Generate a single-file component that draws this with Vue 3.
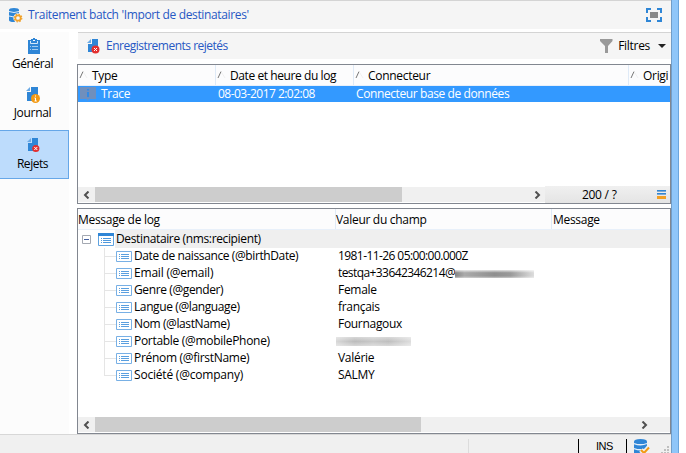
<script setup>
const logColumns = [
  { label: 'Type', cls: 'c-type' },
  { label: 'Date et heure du log', cls: 'c-date' },
  { label: 'Connecteur', cls: 'c-conn' },
  { label: 'Origi', cls: 'c-orig' },
]
const fields = [
  { name: 'Date de naissance (@birthDate)', value: '1981-11-26 05:00:00.000Z', tight: 't-digits' },
  { name: 'Email (@email)', value: 'testqa+33642346214@', mask: 'mask-mail', fit: 't-wide', tight: 't-digits' },
  { name: 'Genre (@gender)', value: 'Female' },
  { name: 'Langue (@language)', value: 'français' },
  { name: 'Nom (@lastName)', value: 'Fournagoux' },
  { name: 'Portable (@mobilePhone)', value: '', mask: 'mask-phone', fit: 't-normal' },
  { name: 'Prénom (@firstName)', value: 'Valérie', fit: 't-normal' },
  { name: 'Société (@company)', value: 'SALMY', fit: 't-wide' },
]
</script>

<template>
  <div class="window">
    <div class="client">
      <header class="titlebar">
        <svg class="db" width="14" height="15" viewBox="0 0 14 15">
          <path d="M0 2Q0 0 5 0t5 2v10q0 2-5 2t-5-2z" fill="#2f86d6" />
          <path d="M0 3.5q5 2 10 0M0 8q5 2 10 0" stroke="#e3eefa" fill="none" />
          <circle cx="9" cy="10" r="4.7" fill="#f5f5f5" />
          <circle cx="9" cy="10" r="2.7" fill="none" stroke="#f0a12b" stroke-width="1.7" />
          <circle cx="9" cy="10" r="3.8" fill="none" stroke="#f0a12b" stroke-width="1.2" stroke-dasharray="1.5 1.48" />
        </svg>
        <h1>Traitement batch 'Import de destinataires'</h1>
        <svg class="full" width="16" height="14" viewBox="0 0 16 14">
          <path d="M1 5V1h4M11 1h4v4M15 9v4h-4M5 13H1V9" fill="none" stroke="#2f86d6" stroke-width="2" />
          <path d="M4 4h8v6H4z" fill="#888" />
        </svg>
      </header>

      <div class="body">
        <nav class="side">
          <a class="tab general">
            <svg width="14" height="16" viewBox="0 0 14 16">
              <path d="M1 2h3V1h2V0h2v1h2v1h3v14H1z" fill="#2f86d6" />
              <path d="M3.5 3v2.5h7V3" fill="none" stroke="#d5e7f8" /><path d="M6 2h2v1H6z" fill="#fcfcfc" />
              <path d="M3 8.5h1M5 8.5h6M3 11.5h1M5 11.5h6" stroke="#a3ccf0" />
            </svg>
            <span>Général</span>
          </a>
          <a class="tab journal">
            <svg width="14" height="16" viewBox="0 0 14 16">
              <path d="M5 0h7v14H1V5h4z" fill="#2f86d6" /><path d="M4 0v4H0z" fill="#6baae5" />
              <circle cx="9.5" cy="11.5" r="4.5" fill="#f39a13" />
              <path d="M9.5 8.5v1M8.5 11h1v3M8.5 14h2.3" stroke="#fff" fill="none" />
            </svg>
            <span>Journal</span>
          </a>
          <a class="tab rejets">
            <svg width="14" height="15" viewBox="0 0 14 15">
              <path d="M5 0h6v13H1V5h4z" fill="#2f86d6" /><path d="M4 0v4H0z" fill="#6baae5" />
              <circle cx="8.8" cy="10.5" r="3.6" fill="#e3302f" />
              <path d="m7.3 9 3 3m0-3-3 3" stroke="#fff" />
            </svg>
            <span>Rejets</span>
          </a>
        </nav>

        <main class="content">
          <div class="toolbar">
            <svg class="rej" width="14" height="15" viewBox="0 0 14 15">
              <path d="M5 0h6v13H1V5h4z" fill="#2f86d6" /><path d="M4 0v4H0z" fill="#6baae5" />
              <circle cx="8.5" cy="10.5" r="4" fill="#e3302f" />
              <path d="m7 9 3 3m0-3-3 3" stroke="#fff" />
            </svg>
            <h2>Enregistrements rejetés</h2>
            <svg class="funnel" width="13" height="14" viewBox="0 0 13 14">
              <path d="M0 0h12.5v2L8 7v7H5V7L0 2z" fill="#999" />
            </svg>
            <span class="filters">Filtres</span>
            <svg class="caret" width="8" height="4" viewBox="0 0 8 4"><path d="M0 0h8L4 4z" fill="#222" /></svg>
          </div>

          <section class="panel logs">
            <div class="head">
              <div v-for="c in logColumns" :key="c.label" :class="c.cls">
                <svg width="10" height="8" viewBox="0 0 10 8"><path d="M1 7 4 .5" stroke="#777" fill="none" /><path d="M4 .5 8 7" stroke="#f0f0f0" /></svg>
                <span>{{ c.label }}</span>
              </div>
            </div>
            <div class="selected">
              <div class="c-type">
                <svg width="16" height="14" viewBox="0 0 16 14">
                  <path d="M0 0h16v12H9l-2 2v-2H0z" fill="#708fbd" />
                  <path d="M8 2v1.5M8 5v5" stroke="#3289e4" stroke-width="2" />
                </svg>
                <span>Trace</span>
              </div>
              <div class="c-date"><span>08-03-2017 2:02:08</span></div>
              <div class="c-conn"><span>Connecteur base de données</span></div>
            </div>
            <div class="blank"></div>
            <div class="foot">
              <div class="scroll">
                <svg class="left" width="7" height="8" viewBox="0 0 7 8"><path d="M5.5.5 2 4l3.5 3.5" /></svg>
                <i class="thumb"></i>
                <svg class="right" width="7" height="8" viewBox="0 0 7 8"><path d="M1.5.5 5 4 1.5 7.5" /></svg>
              </div>
              <div class="count">
                <span>200 / ?</span>
                <svg width="9" height="9" viewBox="0 0 9 9">
                  <path d="M0 .5h9M0 3.5h9" stroke="#2f86d6" /><path d="M0 1.5h9M0 4.5h9" stroke="#7fa9cf" /><path d="M0 6h9v3H0z" fill="#f2a024" />
                </svg>
              </div>
            </div>
          </section>

          <section class="panel details">
            <div class="head">
              <div class="d-name"><span>Message de log</span></div>
              <div class="d-value"><span>Valeur du champ</span></div>
              <div class="d-msg"><span>Message</span></div>
            </div>
            <div class="root">
              <svg width="9" height="9" viewBox="0 0 9 9">
                <path d="M.5.5h8v8h-8z" fill="#fff" stroke="#a4a9b2" /><path d="M2 4.5h5" stroke="#4460a0" />
              </svg>
              <svg class="node" width="16" height="13" viewBox="0 0 16 13">
                <path d="M.5.5h15v12H.5z" fill="#fff" stroke="#5fa2df" /><path d="M0 0h16v3H0z" fill="#2f86d6" />
                <path d="M3 5.5h1M5 5.5h8M3 7.5h1M5 7.5h8M3 9.5h1M5 9.5h8" stroke="#4d98dd" />
              </svg>
              <span>Destinataire (nms:recipient)</span>
            </div>
            <div class="tree">
              <div v-for="f in fields" :key="f.name" class="field">
                <div class="name">
                  <i class="branch"></i>
                  <svg width="16" height="11" viewBox="0 0 16 11">
                    <path d="M.5.5h15v10H.5z" fill="#fff" stroke="#78b0e5" />
                    <path d="M3 3.5h1M5 3.5h8M3 5.5h1M5 5.5h8M3 7.5h1M5 7.5h8" stroke="#5a9fdf" />
                  </svg>
                  <span :class="f.fit">{{ f.name }}</span>
                </div>
                <div class="value"><span v-if="f.value" :class="f.tight">{{ f.value }}</span><i v-if="f.mask" :class="f.mask"></i></div>
              </div>
            </div>
            <div class="scroll">
              <svg class="left" width="7" height="8" viewBox="0 0 7 8"><path d="M5.5.5 2 4l3.5 3.5" /></svg>
              <i class="thumb"></i>
              <svg class="right" width="7" height="8" viewBox="0 0 7 8"><path d="M1.5.5 5 4 1.5 7.5" /></svg>
            </div>
          </section>
        </main>
      </div>

      <footer class="status">
        <div class="s1"></div><div class="s2"></div>
        <div class="ins">INS</div>
        <div class="conn">
          <svg width="36" height="16" viewBox="0 0 36 16">
            <path d="M0 2.5Q0 0 6.5 0T13 2.5V14q-6 3-13 0z" fill="#2f86d6" />
            <path d="M0 4.5q6.5 2.5 13 0M0 9.5q6.5 2.5 13 0" stroke="#e3eefa" stroke-width="1.3" fill="none" />
            <path d="m7 11 3 3 5-6" stroke="#f0f0f0" stroke-width="5" fill="none" />
            <path d="m7 11 3 3 5-5.5" stroke="#f39a13" stroke-width="2" fill="none" />
            <path d="M33 7h2v2h-2zM30 10h2v2h-2zM33 10h2v2h-2zM27 13h2v2h-2zM30 13h2v2h-2zM33 13h2v2h-2z" fill="#bfbfbf" />
          </svg>
        </div>
      </footer>
    </div>
    <div class="frame"></div>
  </div>
</template>

<style>
body { background: #fff; overflow: hidden; }
</style>

<style scoped>
* { box-sizing: border-box; }
.window { display: flex; width: 686px; height: 453px; font: 12px/16px "Open Sans", "Noto Sans", sans-serif; letter-spacing: -0.3px; color: #000; white-space: nowrap; overflow: hidden; }
svg { display: block; flex: none; }
i { display: block; flex: none; }
.client { width: 671px; display: flex; flex-direction: column; }
.frame { width: 8px; background: #8fc6f9; border-left: 1px solid #719dc8; border-right: 1px solid #6ba5dc; }
.titlebar { height: 29px; background: #f5f5f5; border-top: 1px solid #d4d4d4; display: flex; align-items: center; padding-left: 9px; }
h1, h2 { font-size: 12px; font-weight: 400; margin: 0; color: #2758c4; }
h1 { margin-left: 5px; flex: 1; letter-spacing: -0.35px; }
.full { margin-right: 9px; }
.body { flex: 1; display: flex; padding-top: 3px; }
.side { width: 69px; background: #fcfcfc; display: flex; flex-direction: column; }
.tab { display: flex; flex-direction: column; align-items: center; height: 49px; padding: 6px 1px 0 0; }
.tab span { margin: 2px 0 0 -3px; }
.tab.general span { letter-spacing: -0.45px; }
.tab.journal svg { margin-left: -2px; }
.tab.rejets { border: 1px solid #66a7e8; border-left: 0; background: #bddcfc; padding-top: 7px; }
.tab.rejets span { margin: 3px 0 0 -2px; letter-spacing: -0.45px; }
.content { width: 594px; margin-left: 8px; display: flex; flex-direction: column; }
.toolbar { height: 27px; margin-left: 1px; background: #f5f5f5; border-top: 1px solid #d4d4d4; display: flex; align-items: center; padding: 0 5px 0 9px; }
.toolbar h2 { margin-left: 5px; flex: 1; letter-spacing: -0.5px; }
.filters { margin: 0 8px 0 5px; }
.panel { border: 1px solid #828790; background: #fff; display: flex; flex-direction: column; }
.logs { height: 140px; margin-top: 5px; }
.details { height: 226px; margin-top: 4px; }
.head { height: 21px; display: flex; background: #fcfcfd; border-bottom: 1px solid #e8f0fa; overflow: hidden; flex: none; }
.head > div { display: flex; align-items: center; border-right: 1px solid #dfeaf7; }
.c-type { width: 138px; }
.c-date { width: 138px; }
.c-conn { width: 275px; }
.c-orig { width: 60px; flex: none; }
.c-type, .c-date, .c-conn, .c-orig { flex: none; display: flex; align-items: center; }
.head svg { margin: 0 3px 0 1px; }
.head .c-date svg, .head .c-conn svg, .head .c-orig svg { margin-left: 1px; }
.logs .head span { padding-top: 2px; }
.c-date span { letter-spacing: -0.42px; }
.selected { height: 16px; display: flex; align-items: center; background: #3399ff; color: #fff; flex: none; overflow: hidden; }
.selected svg { margin: 0 5px 0 2px; }
.selected .c-date, .selected .c-conn { padding-left: 2px; }
.selected .c-date span { letter-spacing: -0.53px; }
.selected .c-conn span { letter-spacing: -0.4px; }
.blank { flex: 1; }
.foot { display: flex; height: 17px; }
.scroll { height: 15px; background: #f0f0f0; display: flex; align-items: center; margin-top: 1px; }
.scroll path { stroke: #505050; stroke-width: 2; fill: none; }
.scroll .left { margin-left: 5px; }
.thumb { height: 15px; background: #cdcdcd; margin-left: 5px; width: 307px; }
.foot .scroll { width: 467px; }
.foot .right { margin-left: auto; margin-right: 4px; }
.count { flex: 1; height: 17px; background: linear-gradient(#f0f0f0, #e4e4e4); display: flex; align-items: center; padding: 0 4px 0 37px; justify-content: space-between; }
.count span { letter-spacing: -0.35px; word-spacing: 0.3px; }
.details .head > div { padding-top: 1px; }
.d-name { width: 258px; }
.d-value { width: 216px; }
.details .head .d-msg { width: 118px; border: 0; padding-left: 1px; }
.root { height: 18px; display: flex; align-items: center; margin-left: 4px; background: linear-gradient(90deg, #fff 33px, #efefef 33px); flex: none; }
.node { margin-left: 7px; }
.root span { margin-left: 2px; letter-spacing: -0.36px; }
.tree { height: 187px; }
.field { display: flex; height: 17px; align-items: center; }
.name { width: 260px; height: 17px; padding-left: 26px; display: flex; align-items: center; }
.branch { width: 12px; height: 17px; border-left: 1px solid #e5e5e5; background: linear-gradient(#e5e5e5, #e5e5e5) 0 8px / 12px 1px no-repeat; }
.field:last-child .branch { height: 9px; margin-bottom: 8px; }
.name span { margin-left: 2px; letter-spacing: -0.39px; padding-bottom: 2px; }
.name .t-wide { letter-spacing: -0.2px; }
.name .t-normal { letter-spacing: -0.3px; }
.value { display: flex; align-items: center; height: 17px; }
.value span { padding-bottom: 2px; }
.value .t-digits { letter-spacing: -0.58px; }
.mask-mail { width: 79px; height: 8px; background: linear-gradient(rgba(255, 255, 255, 0.75), rgba(255, 255, 255, 0) 35%, rgba(255, 255, 255, 0) 75%, rgba(255, 255, 255, 0.5)), linear-gradient(90deg, #858585, #aaa 12%, #8f8f8f 50%, #999 70%, #ddd); }
.mask-phone { width: 75px; height: 9px; margin-left: -2px; margin-bottom: 1px; background: linear-gradient(rgba(255, 255, 255, 0.4), rgba(255, 255, 255, 0) 50%, rgba(255, 255, 255, 0.4)), linear-gradient(90deg, #d8d8d8, #bcbcbc 25%, #c8c8c8 50%, #bfbfbf 70%, #ddd); }
.details .scroll { margin: auto 0 1px; }
.details .thumb { width: 326px; }
.details .right { margin-left: auto; margin-right: 22px; }
.status { height: 19px; background: #f0f0f0; border-top: 1px solid #d7d7d7; display: flex; padding-top: 4px; }
.s1 { width: 469px; border-right: 1px solid #dcdcdc; }
.s2 { width: 110px; border-right: 1px solid #000; }
.ins { width: 48px; border-right: 1px solid #000; text-align: center; font: 11px/14px "Liberation Sans", sans-serif; letter-spacing: -0.4px; padding-left: 4px; }
.conn { padding-left: 7px; }
</style>
